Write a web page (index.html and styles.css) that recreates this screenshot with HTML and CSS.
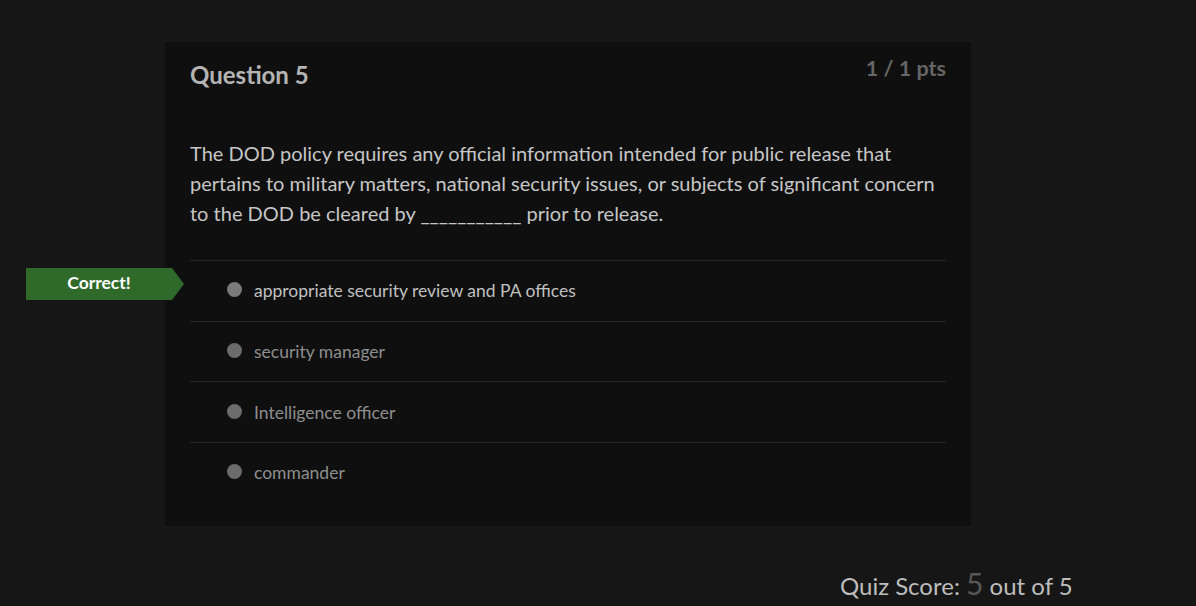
FILE: index.html
```html
<!DOCTYPE html>
<html>
<head>
<meta charset="utf-8">
<link rel="stylesheet" href="styles.css">
</head>
<body>
<main class="page">
  <section class="card">
    <header class="card-head">
      <h2 class="q-title">Question 5</h2>
      <span class="q-pts">1 / 1 pts</span>
    </header>
    <p class="q-text">The DOD policy requires any official information intended for public release that pertains to military matters, national security issues, or subjects of significant concern to the DOD be cleared by ___________ prior to release.</p>
    <ul class="answers">
      <li class="answer selected">
        <span class="badge">Correct!</span>
        <span class="dot"></span>
        <span class="a-text">appropriate security review and PA offices</span>
      </li>
      <li class="answer">
        <span class="dot"></span>
        <span class="a-text">security manager</span>
      </li>
      <li class="answer">
        <span class="dot"></span>
        <span class="a-text">Intelligence officer</span>
      </li>
      <li class="answer">
        <span class="dot"></span>
        <span class="a-text">commander</span>
      </li>
    </ul>
  </section>
  <footer class="score">Quiz Score: <span class="score-num">5</span> out of 5</footer>
</main>
</body>
</html>
```
FILE: styles.css
```css
html, body {
  margin: 0;
  padding: 0;
  background: #161616;
  font-family: Lato, "Open Sans", sans-serif;
}
.page {
  width: 1196px;
  height: 606px;
  overflow: hidden;
  padding-top: 42px;
  box-sizing: border-box;
}
.card {
  margin-left: 165px;
  width: 806px;
  height: 484px;
  box-sizing: border-box;
  background: #0f0f0f;
  padding: 0 25px;
}
.card-head {
  display: flex;
  justify-content: space-between;
  align-items: flex-start;
  padding-top: 17px;
}
.q-title {
  margin: 0;
  font-size: 24px;
  font-weight: 700;
  color: #b4b4b4;
  line-height: 32px;
}
.q-pts {
  font-size: 21.5px;
  font-weight: 700;
  color: #666666;
  line-height: 20px;
  margin-top: -1px;
}
.q-text {
  margin: 47px 0 0 0;
  font-size: 20px;
  line-height: 30px;
  color: #c6c6c6;
}
.answers {
  list-style: none;
  margin: 32px 0 0 0;
  padding: 0;
}
.answer {
  position: relative;
  display: flex;
  align-items: center;
  height: 60.67px;
  border-top: 1px solid #262626;
  padding-left: 37px;
  box-sizing: border-box;
}
.dot {
  width: 15px;
  height: 15px;
  border-radius: 50%;
  background: #6c6c6c;
  margin-right: 12px;
  margin-top: -2px;
}
.selected .dot {
  background: #7a7a7a;
}
.a-text {
  font-size: 17.5px;
  color: #8e8e8e;
}
.selected .a-text {
  color: #c0c0c0;
}
.badge {
  position: absolute;
  left: -164px;
  top: 7px;
  width: 146px;
  height: 32px;
  background: #2f6a2a;
  color: #ffffff;
  font-weight: 700;
  font-size: 17.5px;
  line-height: 30px;
  text-align: center;
}
.badge::after {
  content: "";
  position: absolute;
  right: -12px;
  top: 0;
  border-top: 16px solid transparent;
  border-bottom: 16px solid transparent;
  border-left: 12px solid #2f6a2a;
}
.score {
  margin-left: 840px;
  margin-top: 42px;
  font-size: 24px;
  color: #bdbdbd;
  line-height: 30px;
}
.score-num {
  font-size: 30px;
  color: #565656;
}
```
